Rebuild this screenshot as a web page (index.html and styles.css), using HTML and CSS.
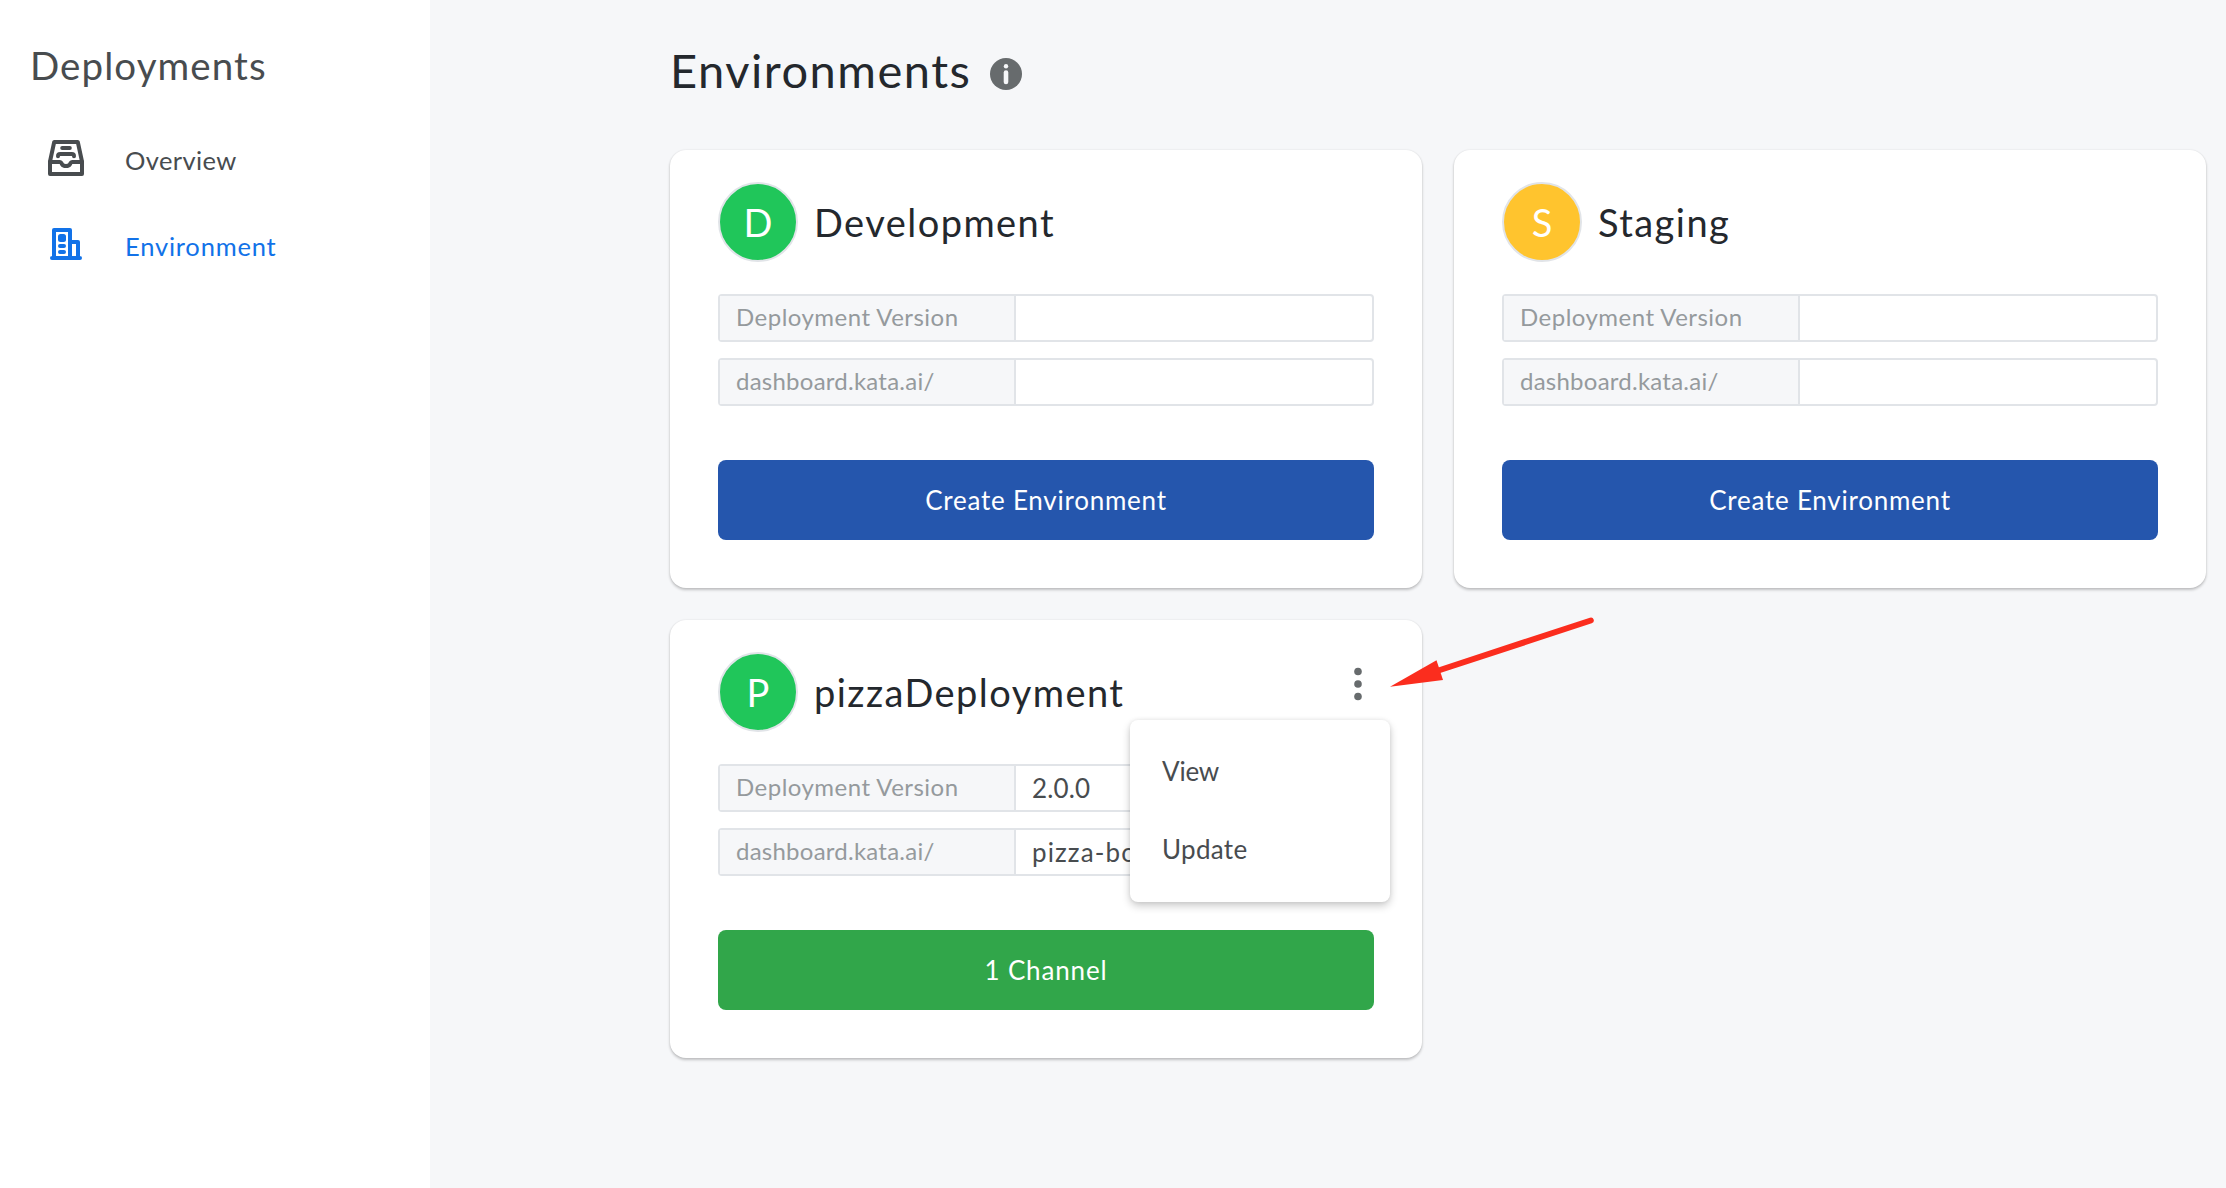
FILE: index.html
```html
<!DOCTYPE html>
<html lang="en">
<head>
<meta charset="utf-8">
<title>Environments</title>
<link rel="stylesheet" href="styles.css">
</head>
<body>
<div class="app">
  <aside class="sidebar">
    <h2 class="sidebar-title">Deployments</h2>
    <nav class="nav">
      <a class="nav-item nav-overview">
        <svg class="nav-icon" viewBox="0 0 36 36" fill="none" stroke="currentColor" stroke-width="4" stroke-linejoin="round" stroke-linecap="round">
          <path d="M6.200 2h23.600L34 21.500v12.500H2V21.500z"/>
          <path d="M2 22h9.500c1.500 0 1.800.7 2.400 2 1.500 2.800 6.700 2.800 8.200 0 .6-1.300.9-2 2.400-2H34"/>
          <path d="M14.200 8h7.600M10 16.200c0-2 1-2.200 2.200-2.200h11.600c1.200 0 2.200.2 2.200 2.200"/>
        </svg>
        <span>Overview</span>
      </a>
      <a class="nav-item nav-environment">
        <svg class="nav-icon" viewBox="0 0 36 36" fill="none" stroke="currentColor" stroke-width="4" stroke-linejoin="round" stroke-linecap="round">
          <path d="M4 32h28M6 31V4h16v28M22 16h8v15"/>
          <path d="M12 20h4M12 26h4"/>
          <rect x="10" y="8" width="8" height="8" rx="2.500" fill="currentColor" stroke="none"/>
        </svg>
        <span>Environment</span>
      </a>
    </nav>
  </aside>

  <main class="main">
    <header class="page-head">
      <h1 class="page-title">Environments</h1>
      <svg class="info" viewBox="0 0 32 32">
        <circle cx="16" cy="16" r="16" fill="#676b6d"/>
        <circle cx="16" cy="8.300" r="2.200" fill="#f6f7f9"/>
        <path d="M16 14.500v9.500" stroke="#f6f7f9" stroke-width="4.600" stroke-linecap="round"/>
      </svg>
    </header>

    <div class="cards">
      <section class="card">
        <div class="card-head">
          <span class="avatar green">D</span>
          <h3 class="card-title">Development</h3>
        </div>
        <div class="field"><span class="label">Deployment Version</span><span class="value"></span></div>
        <div class="field"><span class="label label-url">dashboard.kata.ai/</span><span class="value"></span></div>
        <button class="button">Create Environment</button>
      </section>

      <section class="card">
        <div class="card-head">
          <span class="avatar yellow">S</span>
          <h3 class="card-title">Staging</h3>
        </div>
        <div class="field"><span class="label">Deployment Version</span><span class="value"></span></div>
        <div class="field"><span class="label label-url">dashboard.kata.ai/</span><span class="value"></span></div>
        <button class="button">Create Environment</button>
      </section>

      <section class="card">
        <div class="card-head">
          <span class="avatar green">P</span>
          <h3 class="card-title">pizzaDeployment</h3>
          <svg class="dots" viewBox="0 0 8 34" fill="#676b6d">
            <circle cx="4" cy="4.500" r="3.800"/><circle cx="4" cy="17" r="3.800"/><circle cx="4" cy="29.500" r="3.800"/>
          </svg>
        </div>
        <div class="field"><span class="label">Deployment Version</span><span class="value">2.0.0</span></div>
        <div class="field"><span class="label label-url">dashboard.kata.ai/</span><span class="value value-url">pizza-bot</span></div>
        <button class="button button-green">1 Channel</button>
        <div class="menu">
          <a class="menu-item menu-view">View</a>
          <a class="menu-item">Update</a>
        </div>
        <svg class="arrow" viewBox="0 0 210 80">
          <path d="M200.800 10.500L50 60" stroke="#fb2d1e" stroke-width="6" stroke-linecap="round"/>
          <path d="M0 76.800L46.500 50.300L53 70z" fill="#fb2d1e"/>
        </svg>
      </section>
    </div>
  </main>
</div>
</body>
</html>
```

FILE: styles.css
```css
* { box-sizing: border-box; }

body {
  margin: 0;
  font-family: Lato, "Open Sans", sans-serif;
  color: #24282d;
  background: #f6f7f9;
}

h1, h2, h3 { margin: 0; font-weight: 400; }

.app { display: flex; height: 1188px; overflow: hidden; }

/* Sidebar */
.sidebar {
  flex: none;
  width: 430px;
  padding-top: 40px;
  background: #fff;
  color: #484c4f;
}

.sidebar-title {
  padding-left: 30px;
  font-size: 38.5px;
  line-height: 50px;
  letter-spacing: 1.09px;
}

.nav { padding-top: 27px; }

.nav-item {
  display: flex;
  align-items: center;
  gap: 41px;
  height: 86px;
  padding-left: 48px;
  font-size: 25.5px;
  letter-spacing: .8px;
}

.nav-overview { letter-spacing: .4px; }
.nav-environment { color: #1272e8; }
.nav-icon { width: 36px; height: 36px; margin-bottom: 4px; }

/* Content */
.main { flex: none; width: 1796px; padding: 40px 20px 0 240px; }

.page-head { display: flex; align-items: center; gap: 19px; height: 60px; }
.page-title { font-size: 47px; line-height: 60px; letter-spacing: 1.5px; }
.info { width: 32px; height: 32px; margin-top: 8px; }

.cards {
  display: grid;
  grid-template-columns: 752px 752px;
  gap: 32px;
  margin-top: 50px;
}

.card {
  position: relative;
  display: flex;
  flex-direction: column;
  height: 438px;
  padding: 32px 48px 48px;
  border-radius: 16px;
  background: #fff;
  box-shadow: 0 2px 3px rgba(0, 0, 0, .22), 0 0 2px rgba(0, 0, 0, .1);
}

.card-head { display: flex; align-items: center; gap: 16px; height: 80px; margin-bottom: 32px; }

.avatar {
  display: flex;
  align-items: center;
  justify-content: center;
  width: 80px;
  height: 80px;
  border: 2px solid #e1e4e8;
  border-radius: 50%;
  color: #fff;
  font-size: 38px;
  line-height: 76px;
}

.green { background: #20c65a; }
.yellow { background: #ffc42e; }

.card-title { font-size: 38px; line-height: 48px; letter-spacing: 1.45px; }
.dots { width: 8px; height: 34px; margin: 0 12px 16px auto; }

.field {
  display: flex;
  height: 48px;
  margin-bottom: 16px;
  border: 2px solid #e1e4e8;
  border-radius: 4px;
}

.label {
  width: 296px;
  padding-left: 16px;
  border-right: 2px solid #e1e4e8;
  background: #f6f7f9;
  color: #959a9d;
  font-size: 24px;
  line-height: 42px;
  letter-spacing: .48px;
}

.label-url { letter-spacing: .24px; }

.value {
  padding-left: 16px;
  color: #484c4f;
  font-size: 26px;
  line-height: 45px;
  letter-spacing: .14px;
}

.value-url { letter-spacing: 1.1px; }

.button {
  height: 80px;
  margin-top: auto;
  padding: 1px 0 0;
  border: 0;
  border-radius: 8px;
  background: #2556ad;
  color: #fff;
  font: 26px/79px Lato, "Open Sans", sans-serif;
  letter-spacing: .76px;
}

.button-green { background: #31a64a; letter-spacing: .85px; }

/* Card menu, over the fields */
.menu {
  position: absolute;
  top: 100px;
  left: 460px;
  width: 260px;
  height: 182px;
  padding: 12px 32px;
  border-radius: 8px;
  background: #fff;
  box-shadow: 0 4px 8px rgba(0, 0, 0, .2), 0 0 4px rgba(0, 0, 0, .08);
}

.menu-item {
  display: block;
  color: #484c4f;
  font-size: 26px;
  line-height: 78px;
  letter-spacing: .3px;
}

.menu-view { letter-spacing: -.2px; }

.arrow { position: absolute; top: -10px; left: 720px; width: 210px; height: 80px; }
```
